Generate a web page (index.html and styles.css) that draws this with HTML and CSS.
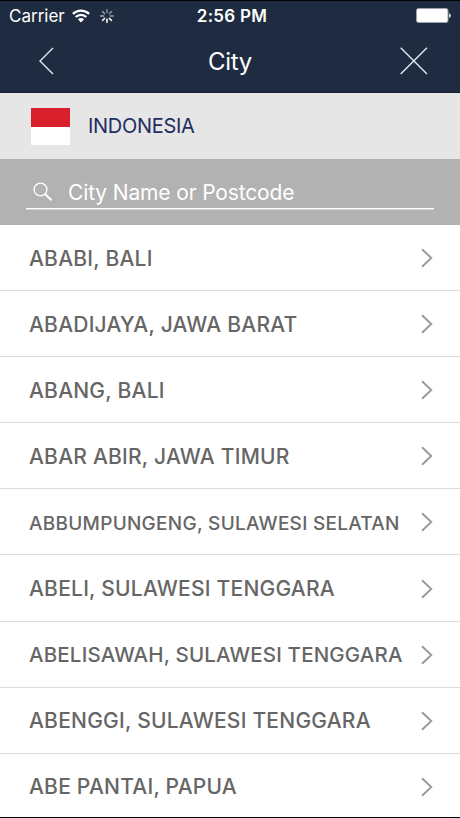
FILE: index.html
```html
<!DOCTYPE html>
<html lang="en">
<head>
<meta charset="utf-8">
<title>City</title>
<link rel="stylesheet" href="styles.css">
</head>
<body>
<div class="screen">
  <header class="header">
    <div class="status">
      <div class="status-left">
        <span class="carrier">Carrier</span>
        <svg class="wifi" width="18" height="14" viewBox="0 0 18 14" fill="none" stroke="#fff" stroke-width="2.3"><path d="M.9 4.9a11.6 11.6 0 0 1 16.2 0M3.7 8a7.5 7.5 0 0 1 10.6 0"/><path d="M9 13.4 5.9 10.3a4.4 4.4 0 0 1 6.2 0z" fill="#fff" stroke="none"/></svg>
        <svg class="spinner" width="14" height="14" viewBox="-7 -7 14 14" stroke="#fff" stroke-width="1.6" stroke-linecap="round"><path d="M0-3.4V-6.2" opacity=".45"/><path d="M2.4-2.4 4.4-4.4" opacity=".45"/><path d="M3.4 0H6.2" opacity=".55"/><path d="M2.4 2.4 4.4 4.4" opacity=".95"/><path d="M0 3.4V6.2"/><path d="M-2.4 2.4-4.4 4.4" opacity=".9"/><path d="M-3.4 0H-6.2" opacity=".65"/><path d="M-2.4-2.4-4.4-4.4" opacity=".5"/></svg>
      </div>
      <span class="time">2:56 PM</span>
      <svg class="battery" width="36" height="15" viewBox="0 0 36 15"><rect x=".5" y=".5" width="31.5" height="14" rx="2" fill="#fff" stroke="#9ba2ae"/><path d="M33.2 5q1.6 1 1.6 2.5T33.2 10z" fill="#fff"/></svg>
    </div>
    <nav class="nav">
      <svg width="15" height="28" viewBox="0 0 15 28" fill="none" stroke="#e4e8f3" stroke-width="1.4"><path d="M14 1 1 14 14 27"/></svg>
      <h1 class="title">City</h1>
      <svg width="28" height="28" viewBox="0 0 28 28" fill="none" stroke="#e4e8f3" stroke-width="1.4"><path d="M.7.7 27 27M27 .7.7 27"/></svg>
    </nav>
  </header>
  <section class="country">
    <span class="flag"></span>
    <span class="country-name">INDONESIA</span>
  </section>
  <section class="search">
    <div class="field">
      <svg class="search-icon" width="20" height="20" viewBox="0 0 20 20" fill="none" stroke="#fff"><circle cx="7.5" cy="7.5" r="6.4" stroke-width="1.4"/><path d="M12.2 12.2 18.5 18.3" stroke-width="2"/></svg>
      <span class="placeholder">City Name or Postcode</span>
    </div>
  </section>
  <ul class="list">
    <li class="row"><span class="city">ABABI, BALI</span><svg class="chevron" viewBox="0 0 12 20"><path d="M1 1.2 10.3 10 1 18.8"/></svg></li>
    <li class="row"><span class="city">ABADIJAYA, JAWA BARAT</span><svg class="chevron" viewBox="0 0 12 20"><path d="M1 1.2 10.3 10 1 18.8"/></svg></li>
    <li class="row"><span class="city">ABANG, BALI</span><svg class="chevron" viewBox="0 0 12 20"><path d="M1 1.2 10.3 10 1 18.8"/></svg></li>
    <li class="row"><span class="city">ABAR ABIR, JAWA TIMUR</span><svg class="chevron" viewBox="0 0 12 20"><path d="M1 1.2 10.3 10 1 18.8"/></svg></li>
    <li class="row"><span class="city city-small">ABBUMPUNGENG, SULAWESI SELATAN</span><svg class="chevron" viewBox="0 0 12 20"><path d="M1 1.2 10.3 10 1 18.8"/></svg></li>
    <li class="row"><span class="city">ABELI, SULAWESI TENGGARA</span><svg class="chevron" viewBox="0 0 12 20"><path d="M1 1.2 10.3 10 1 18.8"/></svg></li>
    <li class="row"><span class="city city-medium">ABELISAWAH, SULAWESI TENGGARA</span><svg class="chevron" viewBox="0 0 12 20"><path d="M1 1.2 10.3 10 1 18.8"/></svg></li>
    <li class="row"><span class="city">ABENGGI, SULAWESI TENGGARA</span><svg class="chevron" viewBox="0 0 12 20"><path d="M1 1.2 10.3 10 1 18.8"/></svg></li>
    <li class="row"><span class="city">ABE PANTAI, PAPUA</span><svg class="chevron" viewBox="0 0 12 20"><path d="M1 1.2 10.3 10 1 18.8"/></svg></li>
  </ul>
</div>
</body>
</html>
```
FILE: styles.css
```css
* { box-sizing: border-box; }
body { margin: 0; font-family: Inter, "Liberation Sans", sans-serif; }
svg { display: block; flex: none; }
.screen {
  display: flex;
  flex-direction: column;
  width: 460px;
  height: 818px;
  overflow: hidden;
  border-top: 1px solid #000;
  border-bottom: 1px solid #000;
  background: #fff;
}
.header { flex: none; height: 92px; background: #1f2b40; color: #fff; border-bottom: 1px solid #172234; }
.status {
  display: grid;
  grid-template-columns: 1fr auto 1fr;
  align-items: center;
  height: 29px;
  padding: 0 8px 0 9px;
}
.status-left { display: flex; align-items: center; }
.carrier { font-size: 17px; line-height: 20px; }
.wifi { margin-left: 7px; }
.spinner { margin-left: 10px; }
.time { margin-left: 3px; font-size: 17px; line-height: 20px; font-weight: 600; letter-spacing: 0.25px; }
.battery { justify-self: end; }
.nav {
  display: grid;
  grid-template-columns: 28px 1fr 28px;
  align-items: center;
  height: 62px;
  padding: 0 32px 0 39px;
}
.title { margin: 0; padding: 1px 7px 0 0; font-size: 24px; line-height: 30px; font-weight: 400; letter-spacing: -0.3px; text-align: center; }
.country { flex: none; display: flex; align-items: center; height: 66px; padding-left: 31px; background: #e6e6e6; }
.flag { width: 39px; height: 37px; background: linear-gradient(#d7202c 50%, #fff 50%); }
.country-name { margin-left: 18px; font-size: 20px; line-height: 24px; letter-spacing: -0.3px; color: #222d62; }
.search { flex: none; height: 66px; padding: 16px 26px 0; background: #b2b2b2; }
.field {
  display: flex;
  align-items: center;
  height: 34px;
  padding-left: 7px;
  border-bottom: 1px solid #fff;
  box-shadow: 0 1px rgba(255, 255, 255, 0.45);
  color: #fff;
}
.placeholder { margin-left: 15px; padding-top: 2px; font-size: 21px; line-height: 26px; letter-spacing: -0.14px; }
.list { margin: 0; padding: 0; list-style: none; }
.row {
  display: flex;
  align-items: center;
  justify-content: space-between;
  height: 66.1px;
  padding: 1px 27px 0 29px;
  border-bottom: 1px solid #dcdcdc;
}
.row:last-child { border-bottom-color: transparent; }
.city { padding-top: 1px; font-size: 21px; line-height: 26px; font-weight: 500; letter-spacing: 0.23px; color: #666; white-space: nowrap; }
.city-medium { font-size: 20.5px; letter-spacing: 0.17px; }
.city-small { padding-top: 3px; font-size: 19px; letter-spacing: 0.27px; }
.chevron { width: 12px; height: 20px; fill: none; stroke: #999; stroke-width: 1.9; }
```
